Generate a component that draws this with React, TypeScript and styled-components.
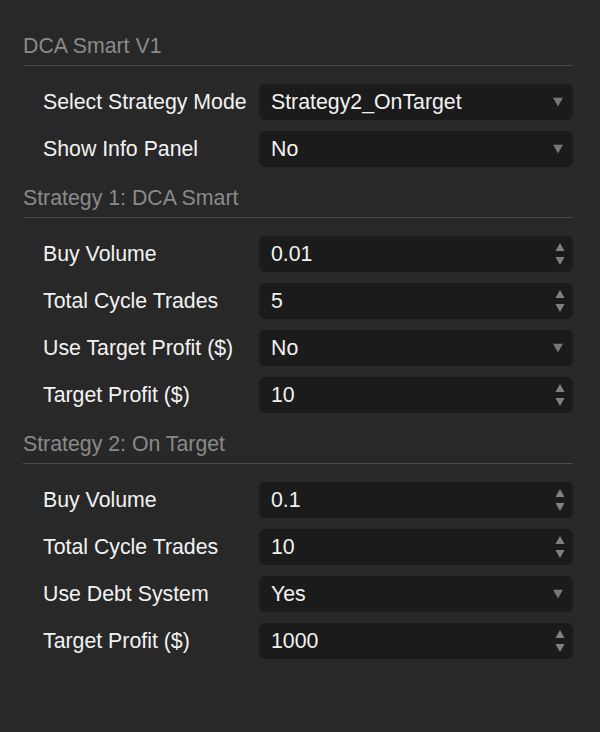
import { FC } from 'react';
import styled, { createGlobalStyle } from 'styled-components';

const GlobalStyle = createGlobalStyle`
	html, body {
		margin: 0;
		padding: 0;
		background: #282828;
	}
	body {
		font-family: 'Liberation Sans', Arial, sans-serif;
	}
`;

const Page = styled.div`
	min-height: 732px;
	box-sizing: border-box;
	padding: 34px 27px 0 23px;
	background: #282828;
`;

const Section = styled.section`
	& + & {
		margin-top: 19px;
	}
`;

const Title = styled.div`
	font-size: 21.3px;
	line-height: 24px;
	color: #8a8a8a;
	padding-bottom: 7px;
	border-bottom: 1px solid #4a4a4a;
`;

const Rows = styled.div`
	display: flex;
	flex-direction: column;
	gap: 11px;
	margin-top: 18px;
	padding-left: 20px;
`;

const Row = styled.div`
	display: grid;
	grid-template-columns: 216px 1fr;
	align-items: center;
`;

const Label = styled.div`
	font-size: 21.3px;
	color: #f2f2f2;
	white-space: nowrap;
`;

const Field = styled.div`
	position: relative;
	display: flex;
	align-items: center;
	height: 36px;
	padding: 0 34px 0 12px;
	border-radius: 6px;
	background: #1b1b1b;
	font-size: 21.3px;
	color: #f2f2f2;
`;

const Arrow = styled.svg`
	position: absolute;
	right: 10px;
	top: 50%;
	transform: translateY(-50%);
`;

type FieldKind = 'select' | 'number';

interface IOption {
	label: string;
	value: string;
	kind: FieldKind;
}

interface ISection {
	title: string;
	options: IOption[];
}

const sections: ISection[] = [
	{
		title: 'DCA Smart V1',
		options: [
			{ label: 'Select Strategy Mode', value: 'Strategy2_OnTarget', kind: 'select' },
			{ label: 'Show Info Panel', value: 'No', kind: 'select' },
		],
	},
	{
		title: 'Strategy 1: DCA Smart',
		options: [
			{ label: 'Buy Volume', value: '0.01', kind: 'number' },
			{ label: 'Total Cycle Trades', value: '5', kind: 'number' },
			{ label: 'Use Target Profit ($)', value: 'No', kind: 'select' },
			{ label: 'Target Profit ($)', value: '10', kind: 'number' },
		],
	},
	{
		title: 'Strategy 2: On Target',
		options: [
			{ label: 'Buy Volume', value: '0.1', kind: 'number' },
			{ label: 'Total Cycle Trades', value: '10', kind: 'number' },
			{ label: 'Use Debt System', value: 'Yes', kind: 'select' },
			{ label: 'Target Profit ($)', value: '1000', kind: 'number' },
		],
	},
];

const FieldIcon: FC<{ kind: FieldKind }> = ({ kind }) =>
	kind === 'select' ? (
		<Arrow width="10" height="9" viewBox="0 0 10 9">
			<polygon points="0,0 10,0 5,9" fill="#777" />
		</Arrow>
	) : (
		<Arrow width="10" height="24" viewBox="0 0 10 24" style={{ right: '8px' }}>
			<polygon points="5,1 9.5,9 0.5,9" fill="#808080" />
			<polygon points="0.5,15 9.5,15 5,23" fill="#808080" />
		</Arrow>
	);

const App: FC = () => {
	return (
		<Page>
			<GlobalStyle />
			{sections.map((section) => (
				<Section key={section.title}>
					<Title>{section.title}</Title>
					<Rows>
						{section.options.map((option) => (
							<Row key={option.label}>
								<Label>{option.label}</Label>
								<Field>
									{option.value}
									<FieldIcon kind={option.kind} />
								</Field>
							</Row>
						))}
					</Rows>
				</Section>
			))}
		</Page>
	);
};

export default App;
